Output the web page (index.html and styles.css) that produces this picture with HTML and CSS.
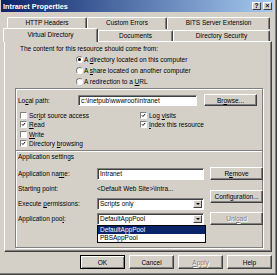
FILE: index.html
```html
<!DOCTYPE html>
<html lang="en">
<head>
  <meta charset="UTF-8"/>
  <title>Intranet Properties</title>
  <link rel="stylesheet" href="styles.css">
</head>
<body>
  <div class="dialog">
    <div class="titlebar">
      <span class="title">Intranet Properties</span>
      <div class="caption-btns">
        <span class="cap-btn">?</span>
        <span class="cap-btn close">×</span>
      </div>
    </div>

    <div class="tabs">
      <div class="tab-row row-back">
        <div class="tab w-http">HTTP Headers</div>
        <div class="tab w-errors">Custom Errors</div>
        <div class="tab w-bits">BITS Server Extension</div>
      </div>
      <div class="tab-row row-front">
        <div class="tab tab-active w-vdir">Virtual Directory</div>
        <div class="tab w-docs">Documents</div>
        <div class="tab w-sec">Directory Security</div>
      </div>
    </div>

    <div class="panel">
      <p class="intro">The content for this resource should come from:</p>
      <div class="radios">
        <div class="opt"><span class="radio checked"></span><span>A <u>d</u>irectory located on this computer</span></div>
        <div class="opt"><span class="radio"></span><span>A <u>s</u>hare located on another computer</span></div>
        <div class="opt"><span class="radio"></span><span>A redirection to a <u>U</u>RL</span></div>
      </div>

      <div class="frame">
        <div class="path-row">
          <span class="path-label">Lo<u>c</u>al path:</span>
          <span class="field path-field">c:\inetpub\wwwroot\intranet</span>
          <span class="btn">Br<u>o</u>wse...</span>
        </div>

        <div class="checks">
          <div class="opt"><span class="check"></span><span>Scr<u>i</u>pt source access</span></div>
          <div class="opt"><span class="check checked"><svg viewBox="0 0 7 7"><path d="M1.2 3.2l1.6 1.7 3-3.6"/></svg></span><span>Log <u>v</u>isits</span></div>
          <div class="opt"><span class="check checked"><svg viewBox="0 0 7 7"><path d="M1.2 3.2l1.6 1.7 3-3.6"/></svg></span><span><u>R</u>ead</span></div>
          <div class="opt"><span class="check checked"><svg viewBox="0 0 7 7"><path d="M1.2 3.2l1.6 1.7 3-3.6"/></svg></span><span><u>I</u>ndex this resource</span></div>
          <div class="opt"><span class="check"></span><span><u>W</u>rite</span></div>
          <div class="opt"></div>
          <div class="opt"><span class="check checked"><svg viewBox="0 0 7 7"><path d="M1.2 3.2l1.6 1.7 3-3.6"/></svg></span><span>Directory <u>b</u>rowsing</span></div>
        </div>

        <div class="sep"></div>
        <div class="app-title">Application settings</div>

        <div class="app-grid">
          <span class="app-label">Application na<u>m</u>e:</span>
          <span class="field">Intranet</span>
          <span class="btn">R<u>e</u>move</span>

          <span class="app-label">Starting point:</span>
          <span class="plain">&lt;Default Web Site&gt;\Intra...</span>
          <span class="btn config">Confi<u>g</u>uration...</span>

          <span class="app-label">Execute <u>p</u>ermissions:</span>
          <span class="field select">Scripts only<span class="arrow"></span></span>

          <span class="app-label">Application poo<u>l</u>:</span>
          <span class="field select pool">DefaultAppPool<span class="arrow"></span>
            <span class="droplist">
              <span class="drop-item selected">DefaultAppPool</span>
              <span class="drop-item">PBSAppPool</span>
            </span>
          </span>
          <span class="btn disabled">Unl<u>o</u>ad</span>
        </div>
      </div>
    </div>

    <div class="actions">
      <span class="btn default">OK</span>
      <span class="btn">Cancel</span>
      <span class="btn disabled"><u>A</u>pply</span>
      <span class="btn">Help</span>
    </div>
  </div>
</body>
</html>
```

FILE: styles.css
```css
* {
  margin: 0;
  padding: 0;
  box-sizing: border-box;
}
body {
  width: 277px;
  height: 275px;
  overflow: hidden;
  background: #D4D0C8;
  font-family: "Liberation Sans", Arial, sans-serif;
  font-size: 6.5px;
  color: #000;
}
u {
  text-decoration-thickness: 1px;
}
.dialog {
  width: 277px;
  height: 275px;
  background: #D4D0C8;
  border-right: 1px solid #404040;
  border-bottom: 1px solid #404040;
  box-shadow: inset -1px -1px #808080;
}

/* title bar */
.titlebar {
  height: 12px;
  margin: 0 3px 0 1px;
  padding: 0 1px 0 2px;
  background: linear-gradient(to right, #0A246A, #A6CAF0);
  display: flex;
  align-items: center;
}
.title {
  color: #fff;
  font-weight: bold;
  font-size: 7.3px;
  flex: 1;
}
.caption-btns {
  display: flex;
  gap: 2px;
}
.cap-btn {
  width: 9px;
  height: 8px;
  background: #D4D0C8;
  border: 1px solid;
  border-color: #fff #404040 #404040 #fff;
  font-size: 6.5px;
  font-weight: bold;
  line-height: 6px;
  text-align: center;
}

/* tabs */
.tabs {
  margin-top: 5px;
}
.tab-row {
  display: flex;
  height: 12px;
}
.row-back {
  margin-left: 7px;
}
.row-front {
  margin-left: 3px;
  align-items: flex-end;
}
.tab {
  height: 12px;
  border-top: 1px solid #fff;
  border-left: 1px solid #fff;
  border-right: 1px solid #404040;
  box-shadow: inset -1px 0 #808080;
  border-radius: 2px 2px 0 0;
  text-align: center;
  line-height: 10px;
}
.row-front .tab {
  height: 11px;
}
.row-front .tab-active {
  height: 14px;
  margin-bottom: -1px;
  position: relative;
  z-index: 1;
  background: #D4D0C8;
  line-height: 11px;
}
.w-http { width: 80px; }
.w-errors { width: 80px; }
.w-bits { width: 103px; }
.w-vdir { width: 95px; }
.w-docs { width: 75px; }
.w-sec { width: 97px; }

/* panel */
.panel {
  margin-left: 4px;
  width: 268px;
  height: 211px;
  border: 1px solid;
  border-color: #fff #404040 #404040 #fff;
  box-shadow: inset -1px -1px #808080;
  padding-left: 10px;
}
.intro {
  margin: 2px 0 0 5px;
  line-height: 9px;
}
.radios {
  margin: 2px 0 0 61px;
  display: flex;
  flex-direction: column;
  gap: 2px;
}
.opt {
  display: flex;
  align-items: center;
  line-height: 9px;
  height: 9px;
  white-space: nowrap;
}
.radio {
  width: 7px;
  height: 7px;
  margin-right: 1px;
  border-radius: 50%;
  background: #fff;
  border: 1px solid;
  border-color: #808080 #fff #fff #808080;
  display: flex;
  align-items: center;
  justify-content: center;
}
.radio.checked::after {
  content: "";
  width: 3px;
  height: 3px;
  border-radius: 50%;
  background: #000;
}

/* group frame */
.frame {
  margin-top: 2px;
  width: 248px;
  height: 160px;
  border: 1px solid #808080;
  box-shadow: inset 1px 1px #fff, 1px 1px #fff;
  padding-top: 5px;
}
.path-row {
  display: flex;
  align-items: center;
  height: 12px;
  padding-left: 2px;
}
.path-label {
  width: 60px;
}
.path-field {
  width: 119px;
  height: 11px;
  margin-right: 7px;
}
.field {
  display: flex;
  align-items: center;
  background: #fff;
  border: 1px solid;
  border-color: #808080 #fff #fff #808080;
  box-shadow: inset 1px 1px #404040;
  padding-left: 2px;
  white-space: nowrap;
  overflow: hidden;
}
.btn {
  display: flex;
  align-items: center;
  justify-content: center;
  width: 53px;
  height: 12px;
  background: #D4D0C8;
  border: 1px solid;
  border-color: #fff #404040 #404040 #fff;
  box-shadow: inset -1px -1px #808080;
  white-space: nowrap;
}
.btn.disabled {
  color: #808080;
  text-shadow: 1px 1px #fff;
}
.btn.default {
  outline: 1px solid #000;
  outline-offset: -1px;
  border-color: #000;
  box-shadow: inset 1px 1px #fff, inset -1px -1px #808080;
}

.checks {
  margin: 4.5px 0 0 4px;
  display: grid;
  grid-template-columns: 120px 1fr;
  grid-auto-rows: 9.5px;
}
.check {
  width: 7px;
  height: 7px;
  margin-right: 2px;
  background: #fff;
  border: 1px solid;
  border-color: #808080 #fff #fff #808080;
  display: flex;
}
.check svg {
  width: 5px;
  height: 5px;
}
.check path {
  fill: none;
  stroke: #000;
  stroke-width: 1.3;
}
.sep {
  margin-top: 1.5px;
  border-top: 1px solid #808080;
  border-bottom: 1px solid #fff;
}
.app-title {
  line-height: 9px;
  margin-left: 2px;
}
.app-grid {
  margin-top: 6px;
  padding-left: 2px;
  display: grid;
  grid-template-columns: 73px 107px 53px;
  grid-template-rows: repeat(4, 13px);
  column-gap: 6px;
  row-gap: 2px;
  align-items: center;
}
.app-grid .field {
  height: 12px;
  position: relative;
  overflow: visible;
}
.app-grid .btn {
  height: 13px;
}
.plain {
  padding-left: 0;
  white-space: nowrap;
}
.btn.config {
  grid-column: 3;
  grid-row: 2 / 4;
}
.select .arrow {
  position: absolute;
  right: 1px;
  top: 1px;
  width: 9px;
  height: 8px;
  background: #D4D0C8;
  border: 1px solid;
  border-color: #fff #404040 #404040 #fff;
  display: flex;
  align-items: center;
  justify-content: center;
}
.select .arrow::after {
  content: "";
  border-left: 2px solid transparent;
  border-right: 2px solid transparent;
  border-top: 2px solid #000;
}
.droplist {
  position: absolute;
  top: 11px;
  left: -1px;
  width: 109px;
  background: #fff;
  border: 1px solid #000;
  display: flex;
  flex-direction: column;
  z-index: 2;
}
.drop-item {
  height: 8px;
  line-height: 8px;
  padding-left: 2px;
}
.drop-item.selected {
  background: #0A246A;
  color: #fff;
}

/* bottom buttons */
.actions {
  margin-top: 3px;
  padding-left: 80px;
  display: flex;
  gap: 4px;
}
.actions .btn {
  width: 45px;
  height: 14px;
}
```
